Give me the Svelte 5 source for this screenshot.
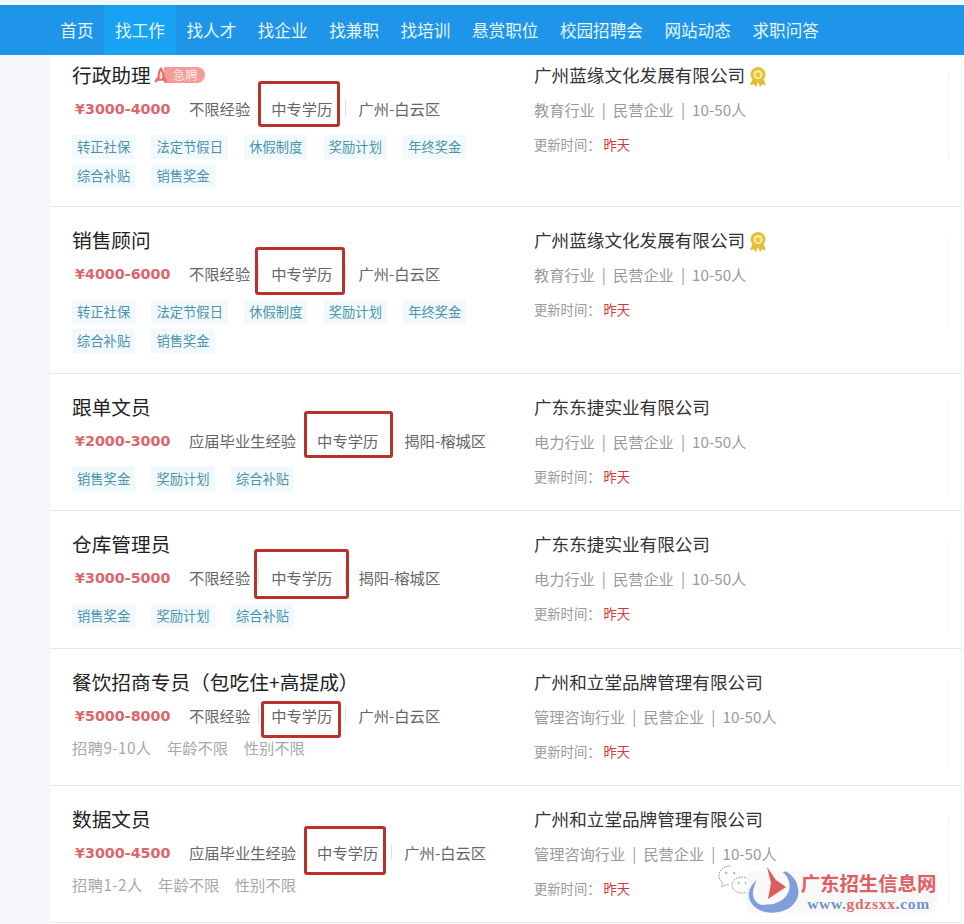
<script lang="ts">
  const navItems = ['首页', '找工作', '找人才', '找企业', '找兼职', '找培训', '悬赏职位', '校园招聘会', '网站动态', '求职问答'];

  const longTags = ['转正社保', '法定节假日', '休假制度', '奖励计划', '年终奖金', '综合补贴', '销售奖金'];
  const shortTags = ['销售奖金', '奖励计划', '综合补贴'];

  const jobs = [
    { title: '行政助理', urgent: true, salary: '3000-4000', exp: '不限经验', city: '广州-白云区', tags: longTags, company: '广州蓝缘文化发展有限公司', medal: true, desc: '教育行业', box: [-13, -19, -8, -11] },
    { title: '销售顾问', salary: '4000-6000', exp: '不限经验', city: '广州-白云区', tags: longTags, company: '广州蓝缘文化发展有限公司', medal: true, desc: '教育行业', box: [-16, -18, -13, -14] },
    { title: '跟单文员', salary: '2000-3000', exp: '应届毕业生经验', city: '揭阳-榕城区', tags: shortTags, company: '广东东捷实业有限公司', desc: '电力行业', box: [-13, -21, -15, -10] },
    { title: '仓库管理员', salary: '3000-5000', exp: '不限经验', city: '揭阳-榕城区', tags: shortTags, company: '广东东捷实业有限公司', desc: '电力行业', box: [-17, -20, -17, -14] },
    { title: '餐饮招商专员（包吃住+高提成）', salary: '5000-8000', exp: '不限经验', city: '广州-白云区', info: ['招聘9-10人', '年龄不限', '性别不限'], company: '广州和立堂品牌管理有限公司', desc: '管理咨询行业', box: [-10, -6, -9, -15] },
    { title: '数据文员', salary: '3000-4500', exp: '应届毕业生经验', city: '广州-白云区', info: ['招聘1-2人', '年龄不限', '性别不限'], company: '广州和立堂品牌管理有限公司', desc: '管理咨询行业', box: [-13, -18, -8, -15] }
  ];
</script>

<div class="page">
  <nav class="nav">
    {#each navItems as item}
      <a href="#top" class="nav-link" class:active={item === '找工作'}>{item}</a>
    {/each}
  </nav>

  <main class="list">
    {#each jobs as job}
      <article class="job">
        <div class="main">
          <h3 class="title">
            {job.title}
            {#if job.urgent}
              <span class="urgent">
                <svg class="rocket" viewBox="0 0 14 16" aria-hidden="true">
                  <path d="M7 0C4.600 2.600 3.600 6 3.600 9.400L1 13v3l3.400-2.200h5.200L13 16v-3l-2.600-3.600C10.400 6 9.400 2.600 7 0z" fill="#ee6c66" />
                  <path d="M7 4c-1 1.600-1.400 3.600-1.400 5.600 0 .8.300 1.800.5 2.400h1.800c.2-.6.500-1.600.5-2.400C8.400 7.600 8 5.600 7 4z" fill="#fde3e0" />
                </svg>
                <span class="pill">急聘</span>
              </span>
            {/if}
          </h3>
          <div class="meta">
            <span class="salary">¥{job.salary}</span>
            <span class="meta-item first">{job.exp}</span>
            <span class="meta-item edu">
              中专学历
              <i class="mark" style="left:{job.box[0]}px;top:{job.box[1]}px;right:{job.box[2]}px;bottom:{job.box[3]}px"></i>
            </span>
            <span class="meta-item last">{job.city}</span>
          </div>
          {#if job.tags}
            <div class="tags" class:wrapped={job.tags.length > 5}>
              {#each job.tags as tag}
                <span class="tag">{tag}</span>
              {/each}
            </div>
          {:else}
            <div class="info">
              {#each job.info as text}
                <span>{text}</span>
              {/each}
            </div>
          {/if}
        </div>

        <div class="side">
          <div class="company">
            {job.company}
            {#if job.medal}
              <svg class="medal" viewBox="0 0 18 22" aria-hidden="true">
                <path d="M4 12l-3 7 4-.6L7 21l2-5 2 5 2-2.600 4 .6-3-7z" fill="#e2bd3a" />
                <circle cx="9" cy="8.500" r="7.500" fill="#e6c02e" />
                <circle cx="9" cy="8.500" r="4.600" fill="#f8eca8" />
                <path d="M9 5.300l1 2.100 2.300.3-1.700 1.600.4 2.300L9 10.500l-2 1.100.4-2.300-1.700-1.600 2.300-.3z" fill="#e6c02e" />
              </svg>
            {/if}
          </div>
          <div class="desc">{job.desc} | 民营企业 | 10-50人</div>
          <div class="time">更新时间：<span class="when">昨天</span></div>
        </div>

        <div class="rule"></div>
      </article>
    {/each}
  </main>

  <div class="watermark">
    <svg class="chat" viewBox="0 0 36 31" aria-hidden="true">
      <path d="M12 1C5.500 1 1 5 1 11c0 3 1.500 5 3.500 6.500L3.500 22l5-2.500c1 .3 2 .4 3 .4" />
      <path d="M24 12c-5.500 0-10 3.500-10 8s4.500 8 10 8c1 0 2-.1 3-.4l3.500 2-1-3c3-1.500 4.500-4 4.500-6.600 0-4.500-4.500-8-10-8z" />
      <circle cx="8" cy="8" r="1" />
      <circle cx="16" cy="8" r="1" />
      <circle cx="20.500" cy="18" r=".8" />
      <circle cx="27.500" cy="18" r=".8" />
    </svg>
    <div class="wm-plate"></div>
    <svg class="wm-logo" viewBox="0 0 52 48" aria-hidden="true">
      <path d="M10 14C2 20-1 30 5 38c7 9 21 11 33 6 10-4 15-13 13-22-1-7-5-12-11-16-1-.6-3-.6-4 .5 5 4 8 11 6 18-3 9-13 15-23 14C11 41 5 33 6 26c.4-4 2-8 4-12z" fill="#7f9fdc" />
      <path d="M20 1l9 13 10 7-18 12 3-16z" fill="#de5c5e" />
    </svg>
    <div class="wm-text">
      <div class="wm-name">广东招生信息网</div>
      <div class="wm-url"><span class="blue">www.</span>gdzsxx<span class="blue">.com</span></div>
    </div>
  </div>
</div>

<style>
  :global(body) {
    margin: 0;
    background: #fff;
  }

  .page {
    position: relative;
    height: 924px;
    padding-top: 5px;
    box-sizing: border-box;
    overflow: hidden;
    background: linear-gradient(to right, #f6f7fb 50px, #fff 50px);
    font-family: "Noto Sans CJK SC", "Liberation Sans", sans-serif;
    font-weight: 400;
  }

  .page::before {
    content: "";
    position: absolute;
    top: 0;
    left: 0;
    right: 0;
    height: 5px;
    background: #eef8fd;
  }

  .nav {
    position: relative;
    z-index: 2;
    display: flex;
    height: 50px;
    padding-left: 49.500px;
    background: #1f95e9;
  }

  .nav-link {
    padding: 0 10.800px;
    color: #e6f5ff;
    font-size: 16.600px;
    line-height: 50px;
    text-decoration: none;
    white-space: nowrap;
  }

  .nav-link.active {
    background: #17a3f2;
  }

  .list {
    margin: -15px 2px 0 50px;
    border-right: 1px solid #f0f0f0;
  }

  .job {
    display: grid;
    grid-template-columns: 462px 414px 1px;
    padding: 21px 0 19px 22px;
    border-bottom: 1px solid #e8e8e8;
  }

  .job:first-child {
    padding-top: 23px;
    padding-bottom: 17px;
  }

  .job:nth-child(4) {
    padding-bottom: 20px;
  }

  .title {
    display: flex;
    align-items: center;
    margin: 0;
    height: 24px;
    color: #222;
    font-size: 19.700px;
    font-weight: 400;
    line-height: 24px;
    white-space: nowrap;
  }

  .urgent {
    display: inline-flex;
    align-items: center;
    margin-left: 3px;
  }

  .rocket {
    position: relative;
    z-index: 1;
    width: 14px;
    height: 16px;
  }

  .pill {
    margin-left: -4px;
    padding: 0 7px 0 9px;
    border-radius: 0 8px 8px 0;
    background: #f59b98;
    color: #fde6e4;
    font-size: 12.500px;
    line-height: 16px;
  }

  .meta {
    display: flex;
    align-items: center;
    height: 24px;
    margin-top: 9px;
    color: #666;
    font-size: 15.300px;
    white-space: nowrap;
  }

  .salary {
    width: 114px;
    padding: 2px 0 0 3px;
    box-sizing: border-box;
    color: #dc666c;
    font-family: "DejaVu Sans", "Liberation Sans", sans-serif;
    font-size: 14.300px;
    font-weight: 700;
  }

  .meta-item {
    position: relative;
    line-height: 20px;
    padding: 0 13px 0 12px;
    border-right: 1px solid #ddd;
    height: 16px;
    display: flex;
    align-items: center;
  }

  .meta-item.first {
    padding: 0 8px 0 3px;
  }

  .meta-item.last {
    border-right: 0;
  }

  .mark {
    position: absolute;
    margin: 0 13px 0 12px;
    border: 3px solid #bb302b;
    border-radius: 3px;
    z-index: 1;
  }

  .tags {
    display: flex;
    flex-wrap: wrap;
    gap: 5px 16.300px;
    margin-top: 15px;
    width: 420px;
  }

  .tags.wrapped {
    padding-bottom: 1px;
  }

  .tag {
    height: 24px;
    padding: 0 5px;
    background: #f2f9fd;
    color: #4a94ad;
    font-size: 13.300px;
    line-height: 24px;
    white-space: nowrap;
  }

  .info {
    display: flex;
    gap: 15.500px;
    height: 24px;
    margin: 8px 0 7px;
    color: #a8a8a8;
    font-size: 15.300px;
    line-height: 24px;
  }

  .info span:first-child {
    letter-spacing: .4px;
  }

  .side {
    min-width: 0;
  }

  .company {
    display: flex;
    align-items: center;
    height: 24px;
    color: #333;
    font-size: 17.600px;
    line-height: 24px;
    white-space: nowrap;
  }

  .medal {
    width: 18px;
    height: 22px;
    margin: 3px 0 0 4px;
  }

  .desc {
    height: 24px;
    margin-top: 10px;
    color: #9a9a9a;
    font-size: 15.200px;
    line-height: 24px;
    word-spacing: 3.700px;
    white-space: nowrap;
  }

  .time {
    margin-top: 12px;
    height: 24px;
    color: #999;
    font-size: 13.300px;
    line-height: 24px;
  }

  .when {
    margin-left: 3px;
    color: #d33a3e;
  }

  .rule {
    align-self: start;
    height: 86px;
    margin-top: 10px;
    background: #f2f2f2;
  }

  .watermark {
    position: absolute;
    left: 718px;
    top: 865px;
    width: 222px;
    height: 50px;
  }

  .chat {
    position: absolute;
    left: 0;
    top: 0;
    width: 36px;
    height: 31px;
    fill: none;
    stroke: #666;
    stroke-width: .7;
    stroke-dasharray: 1.500 1;
  }

  .wm-plate {
    position: absolute;
    left: 28px;
    top: 6px;
    right: 3px;
    bottom: 2px;
    border-radius: 6px;
    background: rgba(245, 245, 245, 0.75);
  }

  .wm-logo {
    position: absolute;
    left: 29px;
    top: 1px;
    width: 52px;
    height: 48px;
  }

  .wm-text {
    position: absolute;
    left: 82px;
    top: 9px;
    width: 137px;
    text-align: center;
  }

  .wm-name {
    color: #dd5f64;
    font-family: "Liberation Serif", "Noto Sans CJK SC", sans-serif;
    font-size: 19.400px;
    font-weight: 700;
    line-height: 21px;
    white-space: nowrap;
  }

  .wm-url {
    margin-top: 1px;
    color: #dd6a6e;
    font-family: "Liberation Serif", serif;
    font-size: 15.500px;
    font-weight: 700;
    letter-spacing: .7px;
    line-height: 15px;
    white-space: nowrap;
  }

  .blue {
    color: #6f93cd;
  }
</style>
